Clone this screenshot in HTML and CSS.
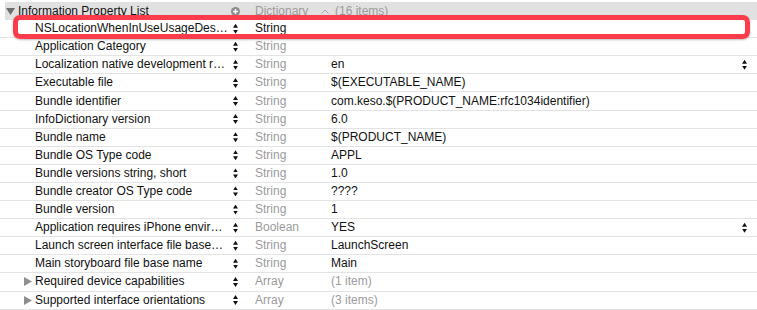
FILE: index.html
```html
<!DOCTYPE html>
<html lang="en">
<head>
<meta charset="UTF-8">
<title>Info.plist</title>
<link rel="stylesheet" href="styles.css">
</head>
<body>
<div class="plist">
  <div class="row head">
    <div class="key">
      <svg class="open" width="9" height="7" viewBox="0 0 9 7"><polygon points="0,0 9,0 4.5,7" fill="#6e6e6e"/></svg>
      Information Property List
    </div>
    <div class="step">
      <svg width="9" height="9" viewBox="0 0 9 9"><circle cx="4.5" cy="4.5" r="4.5" fill="#8c8c8c"/><rect x="2" y="3.8" width="5" height="1.4" fill="#fff"/><rect x="3.8" y="2" width="1.4" height="5" fill="#fff"/></svg>
    </div>
    <div class="type">Dictionary</div>
    <div class="value muted">
      <svg class="caret" width="8" height="5" viewBox="0 0 8 5"><polyline points="0.5,4.5 4,1 7.5,4.5" fill="none" stroke="#a8a8a8" stroke-width="1"/></svg>
      (16 items)
    </div>
    <div></div>
  </div>

  <div class="row">
    <div class="key">NSLocationWhenInUseUsageDes…</div>
    <div class="step"><span class="stepper"></span></div>
    <div class="type dark">String</div>
    <div class="value"></div>
    <div></div>
  </div>
  <div class="row">
    <div class="key">Application Category</div>
    <div class="step"><span class="stepper"></span></div>
    <div class="type">String</div>
    <div class="value"></div>
    <div></div>
  </div>
  <div class="row">
    <div class="key">Localization native development r…</div>
    <div class="step"><span class="stepper"></span></div>
    <div class="type">String</div>
    <div class="value">en</div>
    <div class="step"><span class="stepper"></span></div>
  </div>
  <div class="row">
    <div class="key">Executable file</div>
    <div class="step"><span class="stepper"></span></div>
    <div class="type">String</div>
    <div class="value">$(EXECUTABLE_NAME)</div>
    <div></div>
  </div>
  <div class="row">
    <div class="key">Bundle identifier</div>
    <div class="step"><span class="stepper"></span></div>
    <div class="type">String</div>
    <div class="value">com.keso.$(PRODUCT_NAME:rfc1034identifier)</div>
    <div></div>
  </div>
  <div class="row">
    <div class="key">InfoDictionary version</div>
    <div class="step"><span class="stepper"></span></div>
    <div class="type">String</div>
    <div class="value">6.0</div>
    <div></div>
  </div>
  <div class="row">
    <div class="key">Bundle name</div>
    <div class="step"><span class="stepper"></span></div>
    <div class="type">String</div>
    <div class="value">$(PRODUCT_NAME)</div>
    <div></div>
  </div>
  <div class="row">
    <div class="key">Bundle OS Type code</div>
    <div class="step"><span class="stepper"></span></div>
    <div class="type">String</div>
    <div class="value">APPL</div>
    <div></div>
  </div>
  <div class="row">
    <div class="key">Bundle versions string, short</div>
    <div class="step"><span class="stepper"></span></div>
    <div class="type">String</div>
    <div class="value">1.0</div>
    <div></div>
  </div>
  <div class="row">
    <div class="key">Bundle creator OS Type code</div>
    <div class="step"><span class="stepper"></span></div>
    <div class="type">String</div>
    <div class="value">????</div>
    <div></div>
  </div>
  <div class="row">
    <div class="key">Bundle version</div>
    <div class="step"><span class="stepper"></span></div>
    <div class="type">String</div>
    <div class="value">1</div>
    <div></div>
  </div>
  <div class="row">
    <div class="key">Application requires iPhone envir…</div>
    <div class="step"><span class="stepper"></span></div>
    <div class="type">Boolean</div>
    <div class="value">YES</div>
    <div class="step"><span class="stepper"></span></div>
  </div>
  <div class="row">
    <div class="key">Launch screen interface file base…</div>
    <div class="step"><span class="stepper"></span></div>
    <div class="type">String</div>
    <div class="value">LaunchScreen</div>
    <div></div>
  </div>
  <div class="row">
    <div class="key">Main storyboard file base name</div>
    <div class="step"><span class="stepper"></span></div>
    <div class="type">String</div>
    <div class="value">Main</div>
    <div></div>
  </div>
  <div class="row">
    <div class="key folded">
      <svg class="closed" width="8" height="9" viewBox="0 0 8 9"><polygon points="0,0 8,4.5 0,9" fill="#8e8e8e"/></svg>
      Required device capabilities
    </div>
    <div class="step"><span class="stepper"></span></div>
    <div class="type">Array</div>
    <div class="value muted">(1 item)</div>
    <div></div>
  </div>
  <div class="row">
    <div class="key folded">
      <svg class="closed" width="8" height="9" viewBox="0 0 8 9"><polygon points="0,0 8,4.5 0,9" fill="#8e8e8e"/></svg>
      Supported interface orientations
    </div>
    <div class="step"><span class="stepper"></span></div>
    <div class="type">Array</div>
    <div class="value muted">(3 items)</div>
    <div></div>
  </div>

  <!-- highlight around the new key -->
  <div class="mark"></div>
</div>
</body>
</html>
```

FILE: styles.css
```css
body {
  margin: 0;
  background: #fff;
  font-family: "Liberation Sans", Arial, sans-serif;
  font-size: 12px;
  color: #111;
  overflow: hidden;
}
.plist {
  position: relative;
  padding-top: 2px;
}
.row {
  display: grid;
  grid-template-columns: 230px 25px 76px 1fr 16px;
  align-items: center;
  height: 18.1px;
  line-height: 17px;
  box-sizing: border-box;
  border-bottom: 1px solid #e3e3e3;
  white-space: nowrap;
}
.row.head {
  grid-template-columns: 225px 25px 76px 1fr 16px;
  margin-left: 5px;
  background: #e1e1e1;
  border-bottom: none;
}
.key {
  padding-left: 35px;
  overflow: hidden;
}
.head .key {
  display: flex;
  align-items: center;
  gap: 3px;
  padding-left: 1px;
}
.key.folded {
  display: flex;
  align-items: center;
  gap: 3px;
  padding-left: 24px;
}
.step {
  display: flex;
  align-items: center;
  padding-left: 3px;
  height: 17px;
}
.head .step {
  padding-left: 1px;
}
.row > .step:last-child {
  padding-left: 1px;
}
.stepper {
  display: flex;
  flex-direction: column;
  gap: 2px;
}
.stepper::before,
.stepper::after {
  content: "";
  display: block;
  width: 5px;
  height: 4px;
  background: #111;
}
.stepper::before {
  clip-path: polygon(50% 0, 100% 100%, 0 100%);
}
.stepper::after {
  clip-path: polygon(0 0, 100% 0, 50% 100%);
}
.type {
  color: #9b9b9b;
}
.type.dark {
  color: #111;
}
.value {
  overflow: hidden;
}
.muted {
  color: #9b9b9b;
}
.head .value {
  display: flex;
  align-items: center;
  gap: 6px;
  margin-left: -10px;
}
.mark {
  position: absolute;
  left: 13px;
  top: 15px;
  width: 737px;
  height: 24px;
  box-sizing: border-box;
  border: 5px solid #fc3c4b;
  border-radius: 7px;
  box-shadow: 0 1px 2px rgba(0, 0, 0, 0.25);
}
```
